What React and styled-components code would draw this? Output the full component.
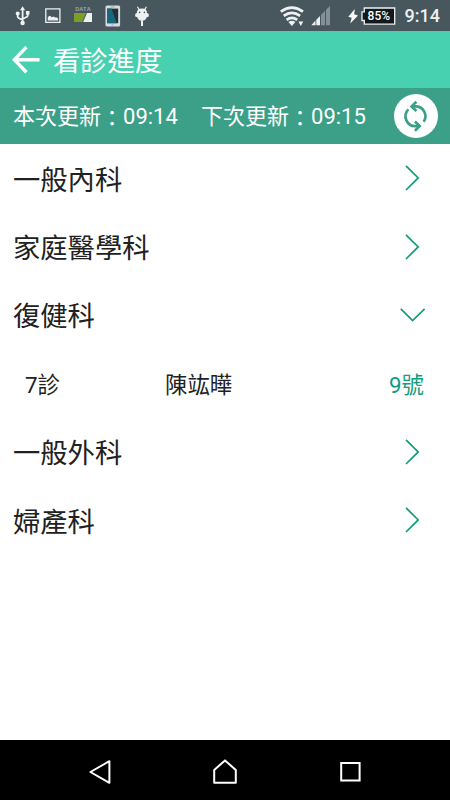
import React from "react";
import styled, { createGlobalStyle } from "styled-components";

const departments = [
  { name: "一般內科" },
  { name: "家庭醫學科" },
  { name: "復健科", open: true, rooms: [{ room: "7診", doctor: "陳竑曄", number: "9號" }] },
  { name: "一般外科" },
  { name: "婦產科" },
];

const UsbIcon = () => (
  <svg width="16" height="20" viewBox="0 0 16 20" fill="none" stroke="#eef1f2" strokeWidth="1.8">
    <path d="M7.6 3v13M2.7 8v2.7q0 1.3 4.9 3M12.7 7v2.8q0 1.2-5.1 3" />
    <path d="M5 4.3 7.6.3l2.6 4z" fill="#eef1f2" stroke="none" />
    <circle cx="7.6" cy="17" r="2.2" fill="#eef1f2" stroke="none" />
    <circle cx="2.7" cy="7.4" r="2" fill="#eef1f2" stroke="none" />
    <path d="M10.9 5h3.6v3.6h-3.6z" fill="#eef1f2" stroke="none" />
  </svg>
);

const PictureIcon = () => (
  <svg width="16" height="16" viewBox="0 0 16 16">
    <path d="M.8.8h14.1v13.6H.8z" fill="none" stroke="#eef1f2" strokeWidth="1.3" />
    <path d="M2.8 12.5V9l2-1.2 2.3 1.5 1.7-.8 1.2 1.1 1.3-.4 1.8 1.3v2z" fill="#eef1f2" />
  </svg>
);

const DataIcon = () => (
  <svg width="18" height="9" viewBox="0 0 18 9">
    <path d="M0 0h12L8.2 9H0z" fill="#7f9d26" />
    <path d="M13 0h5v9H9.2z" fill="#eef1f2" />
  </svg>
);

const PhoneIcon = () => (
  <svg width="16" height="22" viewBox="0 0 16 22">
    <rect x=".5" y=".5" width="14.6" height="21" rx="1.5" fill="#d5dcdf" />
    <path d="M2.2 3.6h11v14.6h-11z" fill="#293034" />
    <path d="M2.2 3.6h4.3l5.2 14.6H2.2z" fill="#19677d" />
    <path d="M5.5 2h4M6.5 20h2.2" stroke="#8e999e" strokeWidth=".8" />
  </svg>
);

const DroidIcon = () => (
  <svg width="14" height="21" viewBox="0 0 14 21">
    <path d="m2.4.8 1.8 3M11.4.8 9.6 3.8" stroke="#eef1f2" strokeWidth="1.2" />
    <path d="M1.8 7Q2 2.6 7 2.6T12 7l1.8 1v2.4l-2.1.8Q10.6 14.8 7 14.8t-4.7-3.6L.2 10.4V8z" fill="#eef1f2" />
    <path d="M6 14.4h2v5.6H6z" fill="#eef1f2" />
    <circle cx="4.6" cy="6.4" r=".8" fill="#48575e" />
    <circle cx="9.4" cy="6.4" r=".8" fill="#48575e" />
  </svg>
);

const WifiIcon = () => (
  <svg width="25" height="21" viewBox="0 0 25 21" fill="none" stroke="#eef1f2" strokeWidth="2.7">
    <path d="M.8 5.7q11.1-8 22.2 0M3.7 9.8q8.2-6 16.4 0M6.6 13.8q5.3-4 10.6 0" />
    <path d="M8.4 16q3.5-2.5 7 0l-3.5 4z" fill="#eef1f2" stroke="none" />
    <path d="M18.4 15.5h4.9L20.8 20z" fill="#eef1f2" stroke="none" />
  </svg>
);

const SignalIcon = () => (
  <svg width="20" height="20" viewBox="0 0 20 20">
    <path d="M4.5 14.5v4.8H.3zM5.3 13.8 9 9.9v9.4H5.3z" fill="#eef1f2" />
    <path d="m10 8.9 4-4.2v14.6h-4zM15 3.7 19 0v19.3h-4z" fill="#849096" />
  </svg>
);

const BoltIcon = () => (
  <svg width="11" height="15" viewBox="0 0 11 15">
    <path d="M6.8 0 .3 7.7l3.4 1L2.2 14.6 10 6.4 6.2 5.3z" fill="#fff" />
  </svg>
);

const BatteryShape = () => (
  <svg width="35" height="19" viewBox="0 0 35 19">
    <path d="M3.3 1h30.4v16.2H3.3v-3.7H1V4.8h2.3z" fill="#11191d" stroke="#eef1f2" strokeWidth="1.3" />
  </svg>
);

const BackArrow = () => (
  <svg width="28" height="28" viewBox="0 0 28 28" fill="none" stroke="#fff" strokeWidth="3.4">
    <path d="M14.4 1.1 2.4 13.7l12 12.5M2.8 13.7H27.6" />
  </svg>
);

const SyncIcon = () => (
  <svg width="44" height="44" viewBox="0 0 44 44" fill="none" stroke="#3c9f87" strokeWidth="2.7">
    <path d="M18.4 12.4H21.5A9.8 9.8 0 0 1 29.6 27.8M25 32.1H22A9.8 9.8 0 0 1 14.4 15.4" />
    <path d="m22.4 7.8-4.8 4.6 4.8 4.6M20.9 27.5l4.8 4.6-4.8 4.6" />
  </svg>
);

const Chevron = ({ open }) => (
  <svg width="26" height="26" viewBox="0 0 26 26" fill="none" stroke="#149b7c" strokeWidth="1.7">
    <path d={open ? "M.8 6.8 12.6 18.6 24.6 6.8" : "M6 .8 18.2 12.9 6 25"} />
  </svg>
);

const UpdateTime = ({ label, time, width }) => (
  <UpdateText $width={width}>
    {label}
    <Colon>：</Colon>
    {time}
  </UpdateText>
);

export default function App() {
  return (
    <>
      <GlobalStyle />
      <Screen>
        <StatusBar>
          <Notifications>
            <UsbIcon />
            <PictureIcon />
            <DataBadge>
              <span>DATA</span>
              <DataIcon />
            </DataBadge>
            <PhoneIcon />
            <DroidIcon />
          </Notifications>
          <SystemIcons>
            <Network>
              <WifiIcon />
              <SignalIcon />
            </Network>
            <Charging>
              <BoltIcon />
              <Battery>
                <BatteryShape />
                <BatteryText>85%</BatteryText>
              </Battery>
            </Charging>
            <Clock>9:14</Clock>
          </SystemIcons>
        </StatusBar>
        <AppBar>
          <BackArrow />
          <Title>看診進度</Title>
        </AppBar>
        <UpdateBar>
          <UpdateTime label="本次更新" time="09:14" width="188px" />
          <UpdateTime label="下次更新" time="09:15" />
          <RefreshButton aria-label="refresh">
            <SyncIcon />
          </RefreshButton>
        </UpdateBar>
        <List>
          {departments.map((item) => (
            <React.Fragment key={item.name}>
              <Row>
                <span>{item.name}</span>
                <Chevron open={item.open} />
              </Row>
              {item.open &&
                item.rooms.map((r) => (
                  <RoomRow key={r.room}>
                    <span>{r.room}</span>
                    <span>{r.doctor}</span>
                    <Number>{r.number}</Number>
                  </RoomRow>
                ))}
            </React.Fragment>
          ))}
        </List>
        <NavBar>
          <svg width="26" height="28" viewBox="0 0 26 28" fill="none" stroke="#fff" strokeWidth="2">
            <path d="M3.4 14 22.4 3.2v21.6z" strokeLinejoin="round" />
          </svg>
          <svg width="26" height="28" viewBox="0 0 26 28" fill="none" stroke="#fff" strokeWidth="2">
            <path d="M2.2 12 13 2.4 23.8 12v12.7H2.2z" strokeLinejoin="round" />
          </svg>
          <svg width="26" height="28" viewBox="0 0 26 28" fill="none" stroke="#fff" strokeWidth="2">
            <path d="M4.2 5h18.4v17.6H4.2z" />
          </svg>
        </NavBar>
      </Screen>
    </>
  );
}

const GlobalStyle = createGlobalStyle`
  body {
    margin: 0;
    background: #fff;
    font-family: Roboto, "Noto Sans CJK TC", sans-serif;
  }

  svg {
    display: block;
    flex-shrink: 0;
  }
`;

const Screen = styled.div`
  width: 450px;
  height: 800px;
  display: flex;
  flex-direction: column;
  overflow: hidden;
  background: #fff;
`;

const StatusBar = styled.div`
  height: 31px;
  flex-shrink: 0;
  display: flex;
  justify-content: space-between;
  padding: 0 10px 0 15px;
  box-sizing: border-box;
  background: #48575e;
`;

const Notifications = styled.div`
  display: flex;
  align-items: center;
  gap: 14px;
  padding-top: 1px;
`;

const DataBadge = styled.div`
  width: 18px;
  height: 16px;
  display: flex;
  flex-direction: column;
  align-items: center;
  justify-content: space-between;
  margin: 0 -1px 4px;

  span {
    font-size: 6px;
    line-height: 6px;
    font-weight: 500;
    letter-spacing: 0.2px;
    color: #a0a9ad;
  }
`;

const SystemIcons = styled.div`
  display: flex;
  align-items: center;
  padding-top: 1px;
`;

const Network = styled.div`
  display: flex;
  align-items: center;
  gap: 6px;
`;

const Charging = styled.div`
  display: flex;
  align-items: center;
  gap: 2px;
  margin: 0 9px 0 17px;
`;

const Battery = styled.div`
  position: relative;
`;

const BatteryText = styled.span`
  position: absolute;
  top: 3px;
  left: 7px;
  font-size: 12px;
  line-height: 13px;
  font-weight: 500;
  color: #fff;
`;

const Clock = styled.span`
  font-size: 18px;
  line-height: 22px;
  font-weight: 500;
  color: #eef1f2;
`;

const AppBar = styled.div`
  height: 57px;
  flex-shrink: 0;
  display: flex;
  align-items: center;
  padding: 0 12px;
  gap: 13px;
  background: #48d1b0;
`;

const Title = styled.h1`
  margin: 0;
  padding-top: 4px;
  font-size: 27.3px;
  line-height: 40px;
  font-weight: 400;
  color: #fff;
`;

const UpdateBar = styled.div`
  height: 56px;
  flex-shrink: 0;
  display: flex;
  align-items: center;
  padding: 0 12px 0 13px;
  box-sizing: border-box;
  background: #3c9f87;
`;

const UpdateText = styled.span`
  width: ${(props) => props.$width || "auto"};
  padding-top: 2px;
  font-size: 22px;
  line-height: 32px;
  color: #fff;
  white-space: nowrap;
`;

const Colon = styled.span`
  line-height: 1;
  vertical-align: -2px;
`;

const RefreshButton = styled.button`
  width: 44px;
  height: 44px;
  margin-left: auto;
  padding: 0;
  border: none;
  border-radius: 50%;
  background: #fff;
`;

const List = styled.div`
  flex: 1;
`;

const Row = styled.div`
  height: 68.4px;
  display: flex;
  align-items: center;
  justify-content: space-between;
  padding: 0 24px 0 13px;
  font-size: 27.3px;
  color: #212121;

  span {
    padding-bottom: 1px;
  }
`;

const RoomRow = styled.div`
  height: 68.4px;
  display: grid;
  grid-template-columns: 140px 1fr auto;
  align-items: center;
  padding: 0 26px 0 25px;
  font-size: 22.4px;
  color: #212121;

  span {
    padding-bottom: 1px;
  }
`;

const Number = styled.span`
  color: #149b7c;
`;

const NavBar = styled.div`
  height: 60px;
  flex-shrink: 0;
  display: flex;
  align-items: center;
  justify-content: space-between;
  padding: 3px 87px 0;
  box-sizing: border-box;
  background: #000;
`;
